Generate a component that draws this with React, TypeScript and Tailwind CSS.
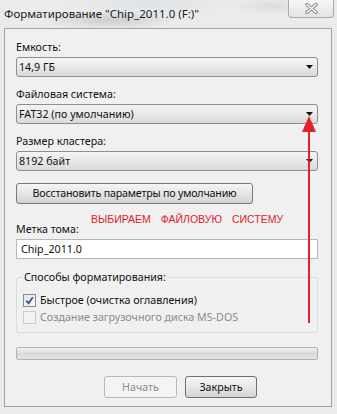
import React from "react";

const Combo = ({ value }: { value: string }) => (
  <div className="h-[20px] w-full flex items-center justify-between rounded-[3px] border border-[#8e8e8e] bg-gradient-to-b from-[#f4f4f4] via-[#e9e9e9] to-[#d9d9d9] pl-[2px] pr-[4px]">
    <span className="leading-[18px]">{value}</span>
    <svg width="7" height="4" viewBox="0 0 7 4">
      <path d="M0 0h7L3.5 4z" fill="#111" />
    </svg>
  </div>
);

const Label = ({ children, className = "" }: { children: React.ReactNode; className?: string }) => (
  <div className={"leading-[14px] mb-[3px] " + className}>{children}</div>
);

export default function App() {
  return (
    <div className="relative w-[337px] h-[414px] overflow-hidden bg-[#ebebeb] bg-[radial-gradient(ellipse_70px_10px_at_110px_20px,#cdcdcd,transparent),radial-gradient(ellipse_90px_10px_at_150px_4px,#dde3e8,transparent),radial-gradient(ellipse_40px_8px_at_270px_6px,#dcdcdc,transparent)] font-['Noto_Sans',sans-serif] text-[10.7px] text-[#111]">
      {/* title bar */}
      <div className="h-[28px] flex justify-between">
        <div className="pl-[4px] pt-[6px] leading-[16px] text-[11.5px] text-[#1a1a1a]">
          Форматирование "Chip_2011.0 (F:)"
        </div>
        <div className="mr-[3px] w-[46px] h-[18px] flex items-center justify-center rounded-b-[4px] border border-t-0 border-[#a9a9a9] bg-gradient-to-b from-[#f6f6f6] to-[#e3e3e3]">
          <svg width="13" height="11" viewBox="0 0 13 11">
            <path d="M2 1.5L11 9.5M11 1.5L2 9.5" stroke="#8a8a8a" strokeWidth="3.6" strokeLinecap="round" />
            <path d="M2 1.5L11 9.5M11 1.5L2 9.5" stroke="#fbfbfb" strokeWidth="1.6" strokeLinecap="round" />
          </svg>
        </div>
      </div>

      {/* dialog body */}
      <div className="ml-[4px] w-[328px] h-[379px] border border-[#a3a3a3] bg-[#f0f0f0] pl-[11px] pr-[13px] pt-[11px] flex flex-col">
        <Label>Емкость:</Label>
        <Combo value="14,9 ГБ" />
        <Label className="mt-[10px]">Файловая система:</Label>
        <Combo value="FAT32 (по умолчанию)" />
        <Label className="mt-[10px]">Размер кластера:</Label>
        <Combo value="8192 байт" />

        <div className="mt-[12px] w-[237px] h-[21px] flex items-center justify-center overflow-hidden whitespace-nowrap rounded-[3px] border border-[#7a7a7a] bg-gradient-to-b from-[#f5f5f5] via-[#e6e6e6] to-[#d2d2d2]">
          <span className="tracking-[-0.2px]">Восстановить параметры по умолчанию</span>
        </div>

        <Label className="mt-[18px]">Метка тома:</Label>
        <div className="h-[20px] w-full flex items-center border border-[#b5b8be] bg-white pl-[4px]">
          Chip_2011.0
        </div>

        <fieldset className="mt-[11px] w-full rounded-[3px] border border-[#d8dcdf] px-[6px] pb-[7px]">
          <legend className="px-[1px] leading-[14px]">Способы форматирования:</legend>
          <div className="mt-[8px] h-[16px] flex items-center gap-[4px]">
            <div className="w-[13px] h-[13px] border border-[#8a8a8a] bg-gradient-to-br from-[#dfe3ea] to-[#f7f8fa] flex items-center justify-center">
              <svg width="9" height="9" viewBox="0 0 9 9">
                <path d="M1.3 4.6L3.6 7.2L7.8 1.2" fill="none" stroke="#3f5488" strokeWidth="1.8" />
              </svg>
            </div>
            <span className="leading-[16px]">Быстрое (очистка оглавления)</span>
          </div>
          <div className="mt-[1px] h-[16px] flex items-center gap-[4px]">
            <div className="w-[13px] h-[13px] border border-[#cacaca] bg-[#f3f3f3]" />
            <span className="leading-[16px] text-[#8c8c8c]">Создание загрузочного диска MS-DOS</span>
          </div>
        </fieldset>

        <div className="mt-[14px] h-[13px] w-full rounded-[2px] border border-[#b3b3b3] bg-gradient-to-b from-[#f2f2f2] via-[#d9d9d9] to-[#e4e4e4]" />

        <div className="mt-[16px] flex gap-[8px] pl-[88px]">
          <div className="w-[73px] h-[22px] flex items-center justify-center rounded-[3px] border border-[#b7babd] bg-[#f4f4f4] text-[#8a8a8a]">
            Начать
          </div>
          <div className="w-[72px] h-[22px] flex items-center justify-center rounded-[3px] border border-[#707070] bg-gradient-to-b from-[#f4f4f4] via-[#e8e8e8] to-[#d3d3d3]">
            Закрыть
          </div>
        </div>
      </div>

      {/* red annotation text */}
      <div className="absolute left-[91px] top-[212px] leading-[14px] font-['Liberation_Sans',sans-serif] text-[10.5px] text-[#e0202c] [word-spacing:7px]">
        ВЫБИРАЕМ ФАЙЛОВУЮ СИСТЕМУ
      </div>

      {/* red arrow */}
      <svg className="absolute left-[300px] top-[112px]" width="18" height="215" viewBox="0 0 18 215">
        <path d="M9 18V211" stroke="#e3222c" strokeWidth="2" />
        <path d="M9 4L16 20H2z" fill="#e3222c" />
      </svg>
    </div>
  );
}
